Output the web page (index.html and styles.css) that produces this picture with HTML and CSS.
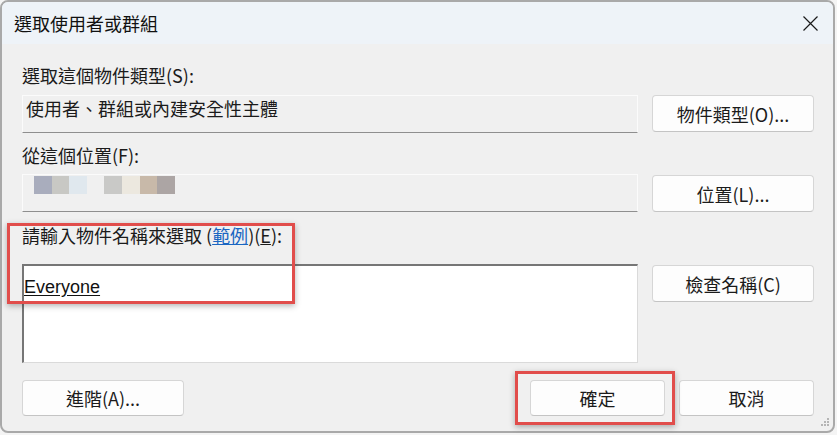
FILE: index.html
```html
<!DOCTYPE html>
<html lang="zh-Hant">
<head>
<meta charset="utf-8">
<title>選取使用者或群組</title>
<link rel="stylesheet" href="styles.css">
</head>
<body>
<div class="screen">
  <div class="window">
    <div class="titlebar">
      <span class="title">選取使用者或群組</span>
      <svg class="close" width="15" height="15" viewBox="0 0 15 15"><path d="M0.5 0.5 L14.5 14.5 M14.5 0.5 L0.5 14.5" stroke="#1a1a1a" stroke-width="1.2" fill="none"/></svg>
    </div>
    <div class="content">
      <div class="label">選取這個物件類型(S):</div>
      <div class="row row-1">
        <div class="field">使用者、群組或內建安全性主體</div>
        <button class="btn">物件類型(O)...</button>
      </div>
      <div class="label label-2">從這個位置(F):</div>
      <div class="row row-2">
        <div class="field field-blur">
          <span class="px px1"></span><span class="px px2"></span><span class="px px3"></span><span class="px px4"></span><span class="px px5"></span><span class="px px6"></span><span class="px px7"></span><span class="px px8"></span>
        </div>
        <button class="btn btn-low">位置(L)...</button>
      </div>
      <div class="label label-3">請輸入物件名稱來選取 (<span class="link">範例</span>)(<u>E</u>):</div>
      <div class="row row-3">
        <div class="textbox"><span class="entry">Everyone</span></div>
        <button class="btn btn-low">檢查名稱(C)</button>
      </div>
      <div class="bottom">
        <button class="btn">進階(A)...</button>
        <div class="actions">
          <button class="btn btn-sm">確定</button>
          <button class="btn btn-sm">取消</button>
        </div>
      </div>
    </div>
    <svg class="grip" width="10" height="10" viewBox="0 0 10 10">
      <rect x="8" y="0" width="2" height="2" fill="#b5b5b5"/>
      <rect x="5" y="3" width="2" height="2" fill="#b5b5b5"/>
      <rect x="8" y="3" width="2" height="2" fill="#b5b5b5"/>
      <rect x="2" y="6" width="2" height="2" fill="#b5b5b5"/>
      <rect x="5" y="6" width="2" height="2" fill="#b5b5b5"/>
      <rect x="8" y="6" width="2" height="2" fill="#b5b5b5"/>
    </svg>
  </div>
  <div class="mark mark-name"></div>
  <div class="mark mark-ok"></div>
</div>
</body>
</html>
```

FILE: styles.css
```css
body {
  margin: 0;
  background: #f4f4f4;
  font-family: "Noto Sans CJK TC", "Noto Sans", sans-serif;
  font-size: 18px;
  color: #1b1b1b;
}

.screen {
  position: relative;
  width: 837px;
  height: 435px;
}

.window {
  position: relative;
  width: 835px;
  height: 433px;
  box-sizing: border-box;
  border: 2px solid #a9a9a9;
  border-radius: 8px;
  background: #f0f0f0;
  overflow: hidden;
  display: flex;
  flex-direction: column;
}

.titlebar {
  height: 42px;
  flex: none;
  background: #eef3f8;
  display: flex;
  align-items: center;
  justify-content: space-between;
  padding: 0 15px 0 12px;
}

.title {
  font-size: 18px;
  color: #111;
  line-height: 24px;
}

.content {
  padding: 19px 19px 0 20px;
  display: flex;
  flex-direction: column;
}

.label {
  line-height: 24px;
  height: 24px;
  white-space: nowrap;
}

.label-2 { margin-top: 10px; }
.label-3 { margin-top: 11px; }

.link {
  color: #1a66c2;
  text-decoration: underline;
}

.row {
  display: flex;
  gap: 14px;
  align-items: flex-start;
}

.row-1 { margin-top: 8px; }
.row-2 { margin-top: 7px; }
.row-3 { margin-top: 17px; }

.field {
  width: 616px;
  height: 38px;
  box-sizing: border-box;
  border: 1px solid #fbfbfb;
  border-bottom: 1px solid #8f8f8f;
  background: #f0f0f0;
  padding: 0 0 0 3px;
  line-height: 24px;
  color: #1b1b1b;
}

.field-blur {
  display: flex;
  padding: 1px 0 0 11px;
}

.px {
  width: 17.6px;
  height: 18px;
}
.px1 { background: #a9adbd; }
.px2 { background: #c8c8c4; }
.px3 { background: #e0e8ee; }
.px4 { background: #f0f0f0; }
.px5 { background: #c9c9c7; }
.px6 { background: #ece8df; }
.px7 { background: #c8b9a9; }
.px8 { background: #aca5a4; }

.textbox {
  width: 616px;
  height: 99px;
  box-sizing: border-box;
  background: #fff;
  border-top: 2px solid #767676;
  border-left: 2px solid #767676;
  border-right: 1px solid #dadada;
  border-bottom: 1px solid #dadada;
  padding: 6px 0 0 0;
}

.entry {
  font-family: "Liberation Sans", "Noto Sans", sans-serif;
  font-size: 18px;
  line-height: 24px;
  text-decoration: underline;
  text-underline-offset: 2px;
  color: #111;
}

.btn {
  width: 162px;
  height: 37px;
  box-sizing: border-box;
  flex: none;
  background: #fdfdfd;
  border: 1px solid #d6d6d6;
  border-bottom-color: #c4c4c4;
  border-radius: 4px;
  font-family: "Noto Sans CJK TC", "Noto Sans", sans-serif;
  font-size: 18px;
  color: #1b1b1b;
  padding: 0;
  line-height: 24px;
}

.btn-low { margin-top: 1px; }

.btn-sm { width: 135px; height: 36px; }

.bottom {
  margin-top: 17px;
  display: flex;
  justify-content: space-between;
}

.bottom > .btn { height: 36px; }

.actions {
  display: flex;
  gap: 14px;
}

.grip {
  position: absolute;
  right: 4px;
  bottom: 3px;
}

.mark {
  position: absolute;
  box-sizing: border-box;
  border: 3px solid #e14d4b;
  box-shadow: 0 2px 6px rgba(0, 0, 0, 0.3);
}

.mark-name {
  left: 7px;
  top: 223px;
  width: 288px;
  height: 81px;
}

.mark-ok {
  left: 515px;
  top: 371px;
  width: 160px;
  height: 54px;
}
```
